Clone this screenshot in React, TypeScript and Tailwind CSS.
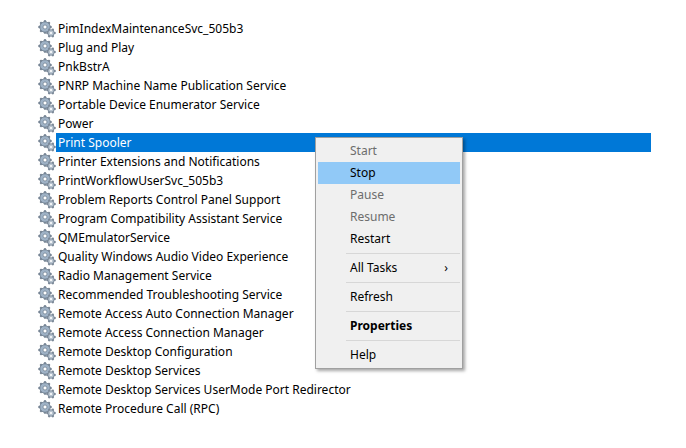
import * as React from "react";

const services = [
  "PimIndexMaintenanceSvc_505b3",
  "Plug and Play",
  "PnkBstrA",
  "PNRP Machine Name Publication Service",
  "Portable Device Enumerator Service",
  "Power",
  "Print Spooler",
  "Printer Extensions and Notifications",
  "PrintWorkflowUserSvc_505b3",
  "Problem Reports Control Panel Support",
  "Program Compatibility Assistant Service",
  "QMEmulatorService",
  "Quality Windows Audio Video Experience",
  "Radio Management Service",
  "Recommended Troubleshooting Service",
  "Remote Access Auto Connection Manager",
  "Remote Access Connection Manager",
  "Remote Desktop Configuration",
  "Remote Desktop Services",
  "Remote Desktop Services UserMode Port Redirector",
  "Remote Procedure Call (RPC)",
];

function Gears() {
  const teeth = (cx: number, cy: number, r: number, n: number) =>
    Array.from({ length: n }).map((_, i) => {
      const a = (i / n) * Math.PI * 2;
      return (
        <circle key={i} cx={cx + Math.cos(a) * r} cy={cy + Math.sin(a) * r} r={1.3} fill="#7d8a99" />
      );
    });
  return (
    <svg width="18" height="18" viewBox="0 0 18 18" className="shrink-0">
      {teeth(7, 7, 5.6, 8)}
      <circle cx="7" cy="7" r="5.2" fill="#9fb2c6" stroke="#6b7b8c" strokeWidth="0.8" />
      <circle cx="7" cy="7" r="2" fill="#ffffff" stroke="#6b7b8c" strokeWidth="0.7" />
      {teeth(13, 13, 3.6, 6)}
      <circle cx="13" cy="13" r="3.2" fill="#b7c3cf" stroke="#6b7b8c" strokeWidth="0.7" />
      <circle cx="13" cy="13" r="1.1" fill="#ffffff" />
    </svg>
  );
}

type Item = { label: string; disabled?: boolean; bold?: boolean; active?: boolean; sub?: boolean; sep?: boolean };
const menu: Item[] = [
  { label: "Start", disabled: true },
  { label: "Stop", active: true },
  { label: "Pause", disabled: true },
  { label: "Resume", disabled: true },
  { label: "Restart", sep: true },
  { label: "All Tasks", sub: true, sep: true },
  { label: "Refresh", sep: true },
  { label: "Properties", bold: true, sep: true },
  { label: "Help" },
];

export default function App() {
  return (
    <div
      className="relative w-[686px] h-[448px] bg-white text-[12px] text-black overflow-hidden"
      style={{ fontFamily: '"Noto Sans", "Open Sans", sans-serif' }}
    >
      <div className="pt-[19px] pl-[38px] pr-[35px] flex flex-col">
        {services.map((s) => (
          <div key={s} className="h-[19px] flex items-center">
            <Gears />
            <span
              className={
                "h-[19px] leading-[19px] pl-[2px] " +
                (s === "Print Spooler" ? "flex-1 bg-[#0078d7] text-white" : "")
              }
            >
              {s}
            </span>
          </div>
        ))}
      </div>

      <div className="absolute left-[315px] top-[137px] w-[148px] bg-[#f0f0f0] border border-[#a0a0a0] shadow-[2px_2px_3px_rgba(0,0,0,0.35)] p-[2px]">
        <div className="flex flex-col">
          {menu.map((m) => (
            <React.Fragment key={m.label}>
              <div
                className={
                  "h-[22px] leading-[22px] pl-[32px] pr-[12px] flex justify-between " +
                  (m.active ? "bg-[#91c9f7] " : "") +
                  (m.disabled ? "text-[#6d6d6d] " : "") +
                  (m.bold ? "font-bold" : "")
                }
              >
                <span>{m.label}</span>
                {m.sub && <span>›</span>}
              </div>
              {m.sep && <div className="my-[3px] ml-[28px] h-px bg-[#d7d7d7]" />}
            </React.Fragment>
          ))}
        </div>
      </div>
    </div>
  );
}
